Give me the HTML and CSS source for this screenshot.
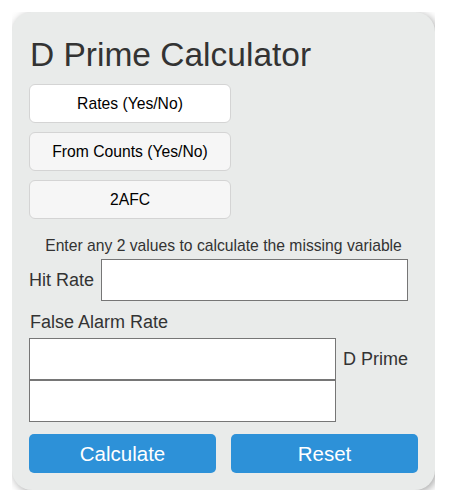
FILE: index.html
```html
<!DOCTYPE html>
<html>
<head>
<meta charset="utf-8">
<link rel="stylesheet" href="styles.css">
</head>
<body>
<div class="frame">
  <div class="card">
    <h1 class="title">D Prime Calculator</h1>
    <div class="modes">
      <button class="mode mode-active">Rates (Yes/No)</button>
      <button class="mode">From Counts (Yes/No)</button>
      <button class="mode">2AFC</button>
    </div>
    <p class="hint">Enter any 2 values to calculate the missing variable</p>
    <div class="row">
      <label class="label">Hit Rate</label>
      <input class="field" type="text">
    </div>
    <div class="label label-block">False Alarm Rate</div>
    <div class="row">
      <input class="field" type="text">
      <label class="label">D Prime</label>
    </div>
    <div class="row">
      <input class="field" type="text">
    </div>
    <div class="actions">
      <button class="action">Calculate</button>
      <button class="action">Reset</button>
    </div>
  </div>
</div>
</body>
</html>
```
FILE: styles.css
```css
* { box-sizing: border-box; }
html, body { background: #fff; }
body {
  margin: 12px;
  font-family: "Liberation Sans", Arial, sans-serif;
}
.frame {
  width: 423px;
  height: 478px;
  overflow: hidden;
}
.card {
  width: 423px;
  height: 478px;
  background: #e9ebea;
  border-radius: 20px;
  box-shadow: 2px 2px 8px rgba(0, 0, 0, 0.35);
  padding: 24px 17px 17px;
  color: #333;
}
.title {
  margin: 0 0 10px 1px;
  font-size: 33.5px;
  font-weight: normal;
  line-height: 38px;
  color: #333;
}
.modes {
  display: flex;
  flex-direction: column;
  gap: 9px;
  align-items: flex-start;
}
.mode {
  width: 202px;
  height: 39px;
  border: 1px solid #d4d4d4;
  border-radius: 6px;
  background: #f6f6f6;
  font-family: "Liberation Sans", Arial, sans-serif;
  font-size: 15.7px;
  color: #000;
  padding: 0;
}
.mode-active { background: #fff; }
.hint {
  margin: 18px 0 5px;
  text-align: center;
  font-size: 15.7px;
  line-height: 17px;
  color: #333;
}
.row {
  display: flex;
  align-items: center;
  gap: 7px;
}
.label {
  font-size: 18px;
  line-height: 21px;
  color: #333;
}
.label-block {
  margin: 11px 0 5px;
  padding-left: 1px;
}
.field {
  width: 307px;
  height: 42px;
  border: 1px solid #767676;
  border-radius: 0;
  background: #fff;
  margin: 0;
  padding: 0 6px;
  font-size: 16px;
}
.actions {
  display: flex;
  gap: 15px;
  margin-top: 12px;
}
.action {
  flex: 1;
  height: 39px;
  border: none;
  border-radius: 5px;
  background: #2d91d8;
  color: #fff;
  font-family: "Liberation Sans", Arial, sans-serif;
  font-size: 20.5px;
  padding: 0;
}
```
